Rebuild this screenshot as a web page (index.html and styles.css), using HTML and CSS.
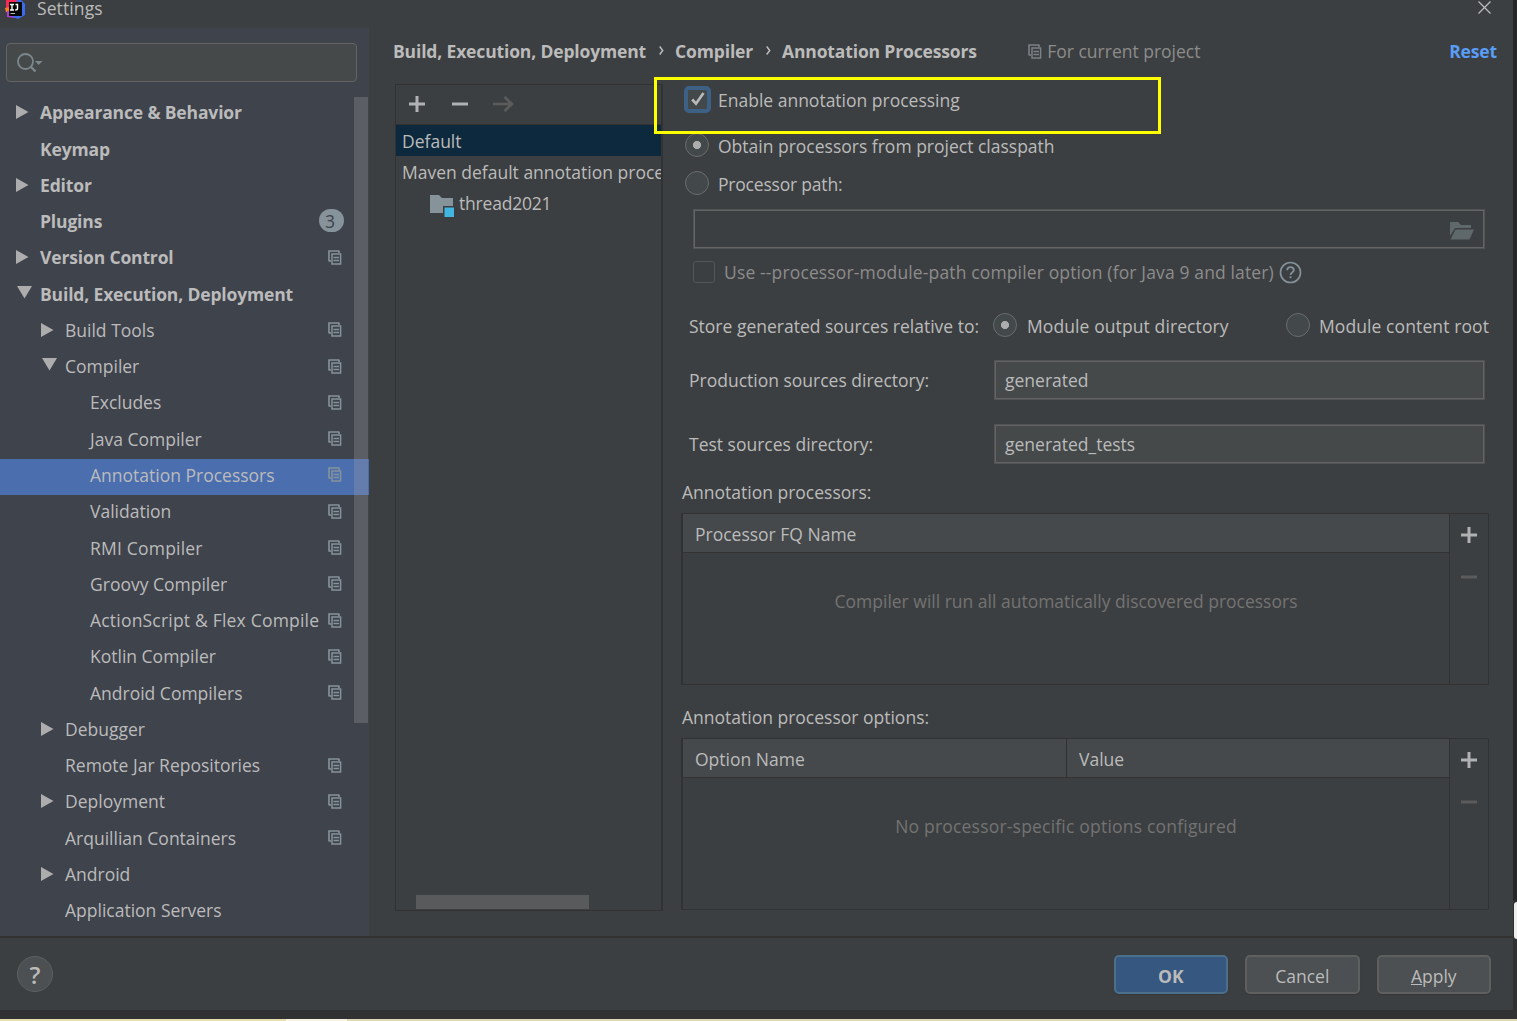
FILE: index.html
```html
<!DOCTYPE html>
<html lang="en">
<head>
    <meta charset="UTF-8">
    <meta name="viewport" content="width=device-width, initial-scale=1.0">
    <title>Settings</title>
    <link rel="stylesheet" href="styles.css">
</head>
<body>
    <!-- Shared icons -->
    <svg class="defs" width="0" height="0">
        <symbol id="copy" viewBox="0 0 14 15">
            <path d="M1 11.5V1H11.5M3.2 11H1M11 1V3" fill="none" stroke="currentColor" stroke-width="1.6"/>
            <rect x="4" y="4" width="8.6" height="10" fill="none" stroke="currentColor" stroke-width="1.5"/>
            <path d="M5.5 7.5H11M5.5 10.5H11" stroke="currentColor" stroke-width="1.4"/>
        </symbol>
        <symbol id="right" viewBox="0 0 13 14"><path d="M0 0L12.5 7L0 14Z" fill="#adadad"/></symbol>
        <symbol id="down" viewBox="0 0 15 13"><path d="M0 0H15L7.5 12.5Z" fill="#adadad"/></symbol>
        <symbol id="plus" viewBox="0 0 16 16"><path d="M0 8H16M8 0V16" stroke="currentColor" stroke-width="3"/></symbol>
        <symbol id="minus" viewBox="0 0 16 16"><path d="M0 8H16" stroke="currentColor" stroke-width="3"/></symbol>
    </svg>

    <div class="dialog">
        <!-- Title bar -->
        <div class="titlebar">
            <svg class="logo" width="21" height="20" viewBox="0 0 21 20">
                <path d="M1 0H13L10 10L1 9Z" fill="#fe2857"/>
                <path d="M0 8L5 7V13L1 12Z" fill="#fc801d"/>
                <path d="M2 11L10 12V18L2 17Z" fill="#af3bd8"/>
                <path d="M12 0H16L20 4V15L13 19L8 17Z" fill="#3b6cf0"/>
                <rect x="4" y="2" width="13" height="14" fill="#080808"/>
                <path d="M5 4.5H9M7 4.5V10M5 10H9M10.5 4.5H12.5V8.5Q12.5 10 10.2 10" fill="none" stroke="#fff" stroke-width="1.4"/>
                <path d="M5.5 13.5H10" stroke="#bbb" stroke-width="1"/>
            </svg>
            <span>Settings</span>
            <svg class="close" width="13" height="13" viewBox="0 0 13 13"><path d="M.5 .5L12.5 12.5M12.5 .5L.5 12.5" stroke="#bdbdbd" stroke-width="1.2"/></svg>
        </div>

        <div class="body">
            <!-- Settings tree -->
            <div class="sidebar">
                <div class="search">
                    <svg width="26" height="20" viewBox="0 0 26 20">
                        <circle cx="8.5" cy="8.5" r="7.5" fill="none" stroke="#7b878c" stroke-width="1.8"/>
                        <path d="M13.5 13.5L18.5 18.5" stroke="#7b878c" stroke-width="2.4"/>
                        <path d="M18 8H25.5L21.7 12Z" fill="#7b878c"/>
                    </svg>
                </div>
                <div class="tree">
                    <div class="row l1 bold"><svg class="arrow"><use href="#right"/></svg>Appearance &amp; Behavior</div>
                    <div class="row l1 bold">Keymap</div>
                    <div class="row l1 bold"><svg class="arrow"><use href="#right"/></svg>Editor</div>
                    <div class="row l1 bold">Plugins<span class="badge">3</span></div>
                    <div class="row l1 bold"><svg class="arrow"><use href="#right"/></svg>Version Control<svg class="copy"><use href="#copy"/></svg></div>
                    <div class="row l1 bold"><svg class="arrow open"><use href="#down"/></svg>Build, Execution, Deployment</div>
                    <div class="row l2"><svg class="arrow"><use href="#right"/></svg>Build Tools<svg class="copy"><use href="#copy"/></svg></div>
                    <div class="row l2"><svg class="arrow open"><use href="#down"/></svg>Compiler<svg class="copy"><use href="#copy"/></svg></div>
                    <div class="row l3">Excludes<svg class="copy"><use href="#copy"/></svg></div>
                    <div class="row l3">Java Compiler<svg class="copy"><use href="#copy"/></svg></div>
                    <div class="row l3 selected">Annotation Processors<svg class="copy"><use href="#copy"/></svg></div>
                    <div class="row l3">Validation<svg class="copy"><use href="#copy"/></svg></div>
                    <div class="row l3 wide">RMI Compiler<svg class="copy"><use href="#copy"/></svg></div>
                    <div class="row l3">Groovy Compiler<svg class="copy"><use href="#copy"/></svg></div>
                    <div class="row l3 wide">ActionScript &amp; Flex Compile<svg class="copy"><use href="#copy"/></svg></div>
                    <div class="row l3">Kotlin Compiler<svg class="copy"><use href="#copy"/></svg></div>
                    <div class="row l3">Android Compilers<svg class="copy"><use href="#copy"/></svg></div>
                    <div class="row l2"><svg class="arrow"><use href="#right"/></svg>Debugger</div>
                    <div class="row l2">Remote Jar Repositories<svg class="copy"><use href="#copy"/></svg></div>
                    <div class="row l2"><svg class="arrow"><use href="#right"/></svg>Deployment<svg class="copy"><use href="#copy"/></svg></div>
                    <div class="row l2">Arquillian Containers<svg class="copy"><use href="#copy"/></svg></div>
                    <div class="row l2"><svg class="arrow"><use href="#right"/></svg>Android</div>
                    <div class="row l2">Application Servers</div>
                    <div class="tree-scroll"></div>
                </div>
            </div>

            <!-- Annotation processors page -->
            <div class="main">
                <div class="breadcrumb">
                    <span class="bold">Build, Execution, Deployment</span>
                    <svg class="sep" width="5" height="9" viewBox="0 0 5 9"><path d="M.7 .5L3.7 4.5L.7 8.5" fill="none" stroke="#bbb" stroke-width="1.5"/></svg>
                    <span class="bold">Compiler</span>
                    <svg class="sep" width="5" height="9" viewBox="0 0 5 9"><path d="M.7 .5L3.7 4.5L.7 8.5" fill="none" stroke="#bbb" stroke-width="1.5"/></svg>
                    <span class="bold">Annotation Processors</span>
                    <svg class="copy"><use href="#copy"/></svg>
                    <span class="project">For current project</span>
                    <a class="reset bold">Reset</a>
                </div>

                <div class="content">
                    <div class="profiles">
                        <div class="toolbar">
                            <svg class="tool"><use href="#plus"/></svg>
                            <svg class="tool"><use href="#minus"/></svg>
                            <svg width="21" height="16" viewBox="0 0 21 16"><path d="M0 8H19M11.5 1L19 8L11.5 15" fill="none" stroke="#5b5b5b" stroke-width="2.6"/></svg>
                        </div>
                        <div class="profile active">Default</div>
                        <div class="profile">Maven default annotation proce</div>
                        <div class="profile module">
                            <svg width="25" height="22" viewBox="0 0 25 22">
                                <path d="M0 0H9L12 3H23V18H0Z" fill="#87939a"/>
                                <rect x="13" y="11" width="12" height="11" fill="#3c3f41"/>
                                <rect x="14.5" y="12.5" width="9.5" height="9.5" fill="#40b6e0"/>
                            </svg>thread2021
                        </div>
                        <div class="profiles-scroll"></div>
                    </div>

                    <div class="form">
                        <div class="line enable">
                            <span class="check focused"><svg width="14" height="14" viewBox="0 0 14 14"><path d="M1.2 7.5L5 11.7L12.5 1" fill="none" stroke="#b8b8b8" stroke-width="2.7"/></svg></span>
                            <span>Enable annotation processing</span>
                        </div>
                        <div class="line obtain"><span class="radio on"></span><span>Obtain processors from project classpath</span></div>
                        <div class="line path"><span class="radio"></span><span>Processor path:</span></div>
                        <div class="field path-field">
                            <svg width="24" height="18" viewBox="0 0 24 18"><path d="M0 0H8L11 3H21V6H5L0 14Z M5.5 7.5H24L19.5 17.5H.5Z" fill="#5f686b"/></svg>
                        </div>
                        <div class="line module-path">
                            <span class="check off"></span>
                            <span>Use --processor-module-path compiler option (for Java 9 and later)</span>
                            <svg width="23" height="23" viewBox="0 0 23 23">
                                <circle cx="11.5" cy="11.5" r="10" fill="none" stroke="#84919a" stroke-width="1.7"/>
                                <path d="M8.2 9.2Q8.3 6.2 11.5 6.2T14.8 9.1Q14.8 10.5 13.2 11.5T11.5 14" fill="none" stroke="#84919a" stroke-width="1.8"/>
                                <rect x="10.6" y="15.3" width="1.9" height="1.9" fill="#84919a"/>
                            </svg>
                        </div>
                        <div class="line store">
                            <span class="store-label">Store generated sources relative to:</span>
                            <span class="radio on"></span><span class="store-output">Module output directory</span>
                            <span class="radio"></span><span class="store-root">Module content root</span>
                        </div>
                        <div class="line dir">
                            <span class="dir-label">Production sources directory:</span>
                            <div class="field filled">generated</div>
                        </div>
                        <div class="line dir">
                            <span class="dir-label">Test sources directory:</span>
                            <div class="field filled">generated_tests</div>
                        </div>

                        <div class="caption">Annotation processors:</div>
                        <div class="table">
                            <div class="grid">
                                <div class="head"><span>Processor FQ Name</span></div>
                                <div class="empty">Compiler will run all automatically discovered processors</div>
                            </div>
                            <div class="actions">
                                <svg class="tool"><use href="#plus"/></svg>
                                <svg class="tool disabled"><use href="#minus"/></svg>
                            </div>
                        </div>

                        <div class="caption">Annotation processor options:</div>
                        <div class="table">
                            <div class="grid">
                                <div class="head two"><span>Option Name</span><span>Value</span></div>
                                <div class="empty wide">No processor-specific options configured</div>
                            </div>
                            <div class="actions">
                                <svg class="tool"><use href="#plus"/></svg>
                                <svg class="tool disabled"><use href="#minus"/></svg>
                            </div>
                        </div>
                    </div>
                </div>
            </div>
        </div>

        <!-- Buttons -->
        <div class="footer">
            <span class="help">?</span>
            <button class="btn primary">OK</button>
            <button class="btn">Cancel</button>
            <button class="btn"><u>A</u>pply</button>
        </div>

        <div class="highlight"></div>
    </div>
    <div class="desktop-strip"></div>
    <div class="desktop-edge"></div>
</body>
</html>
```

FILE: styles.css
```css
* { box-sizing: border-box; }
body { margin: 0; height: 1021px; overflow: hidden; position: relative; background: linear-gradient(90deg, transparent 1513px, #252627 1513px) 0 0 / 100% 900px no-repeat, #2f3133; color: #bbbbbb; font-family: "Open Sans", "Noto Sans", sans-serif; font-size: 17.5px; line-height: 24px; white-space: nowrap; }
svg { flex: none; display: block; }
.defs { position: absolute; }
.bold { font-weight: 700; letter-spacing: -0.15px; }
.wide { letter-spacing: 0.2px; }
.dialog { position: relative; width: 1513px; height: 1010px; background: #3c3f41; display: flex; flex-direction: column; }

/* Title bar */
.titlebar { height: 28px; display: flex; align-items: flex-start; padding: 0 22px 0 5px; }
.titlebar span { margin: -4px auto 0 11px; letter-spacing: 0.1px; }
.close { margin-top: 1px; }

.body { display: flex; height: 908px; }

/* Sidebar */
.sidebar { width: 369px; background: #3f434c; overflow: hidden; }
.search { width: 351px; height: 39px; margin: 15px 0 14.5px 6px; border: 1.5px solid #646464; border-radius: 4px; background: #45494a; padding: 9px 0 0 10px; }
.tree { position: relative; }
.row { height: 36.27px; display: flex; align-items: center; padding-right: 27px; padding-bottom: 4.6px; }
.l1 { padding-left: 40px; }
.l2 { padding-left: 65px; }
.l3 { padding-left: 90px; }
.arrow { width: 13px; height: 14px; margin-left: -24px; margin-right: 11px; }
.arrow.open { width: 15px; height: 13px; margin: -3px 8px 0 -23px; }
.copy { width: 14px; height: 15px; color: #87939a; }
.row .copy { margin-left: auto; }
.selected { background: #4b6eaf; }
.badge { width: 25px; height: 23px; margin: -1px -2px 0 auto; border-radius: 12px; background: #87939a; color: #3f434c; font-weight: 400; text-align: center; padding-right: 3px; line-height: 24px; }
.tree-scroll { position: absolute; right: 1px; top: 0; width: 14px; height: 626px; background: rgba(166, 166, 166, 0.28); }

/* Page */
.main { flex: 1; padding: 10px 24px 0 24px; }
.breadcrumb { height: 26px; display: flex; align-items: center; }
.sep { margin: -2px 11px 0 13px; }
.breadcrumb .copy { margin-left: auto; color: #7a8185; }
.project { width: 153px; margin-left: 5px; color: #8c8c8c; }
.reset { margin: 0 -8px 0 249px; color: #589df6; }
.content { display: flex; margin: 18px 0 0 2px; }
.profiles { position: relative; width: 268px; height: 827px; margin-top: 2px; border: 1px solid #323232; border-right-width: 2px; overflow: hidden; }
.toolbar { height: 40px; display: flex; align-items: center; gap: 27px; padding: 0 0 1px 13px; border-bottom: 1px solid #323232; }
.toolbar svg:last-child { margin-left: -2px; }
.tool { width: 16px; height: 16px; color: #afb1b3; }
.disabled { color: #5b5b5b; }
.profile { height: 31px; padding: 4px 0 0 6px; }
.active { background: #0d293e; }
.module { display: flex; padding-left: 34px; gap: 4px; letter-spacing: -0.2px; }
.module svg { margin-top: 4px; }
.profiles-scroll { position: absolute; left: 20px; bottom: 1px; width: 173px; height: 14px; background: #595a5c; }

.form { width: 808px; margin-left: 18px; }
.line { display: flex; align-items: center; }
.enable { height: 37px; padding: 0 0 1px 3px; gap: 7px; }
.check { width: 22px; height: 22px; border: 1.5px solid #6b6b6b; border-radius: 3px; background: #43494a; display: flex; align-items: center; justify-content: center; }
.focused { width: 27px; height: 27px; border: 4px solid #3d6185; border-radius: 5px; margin-top: -2px; }
.off { background: none; border-color: #545556; }
.radio { width: 24px; height: 24px; border: 1.5px solid #6b6b6b; border-radius: 50%; background: #43494a; margin-top: -2px; flex: none; }
.on { background: radial-gradient(circle, #adadad 3.7px, #43494a 4.4px); }
.obtain, .path { height: 37px; padding: 0 0 1px 4px; gap: 9px; }
.obtain { margin-top: 9px; }
.path { letter-spacing: -0.2px; padding-bottom: 0; }
.path .radio { margin-top: -1px; }
.field { height: 40px; border: 1px solid #515455; box-shadow: inset 0 0 0 1px #646464; }
.path-field { width: 792px; margin: 7px 0 0 12px; display: flex; justify-content: flex-end; align-items: center; padding: 3px 10px 0 0; }
.module-path { height: 48px; margin-top: -1px; padding-left: 12px; gap: 9px; color: #8c8c8c; letter-spacing: 0.14px; }
.module-path svg { margin-left: -4px; }
.store { height: 58px; margin-top: 1px; padding-left: 8px; }
.store-label { width: 304px; }
.store-output { margin-left: 10px; width: 259px; letter-spacing: 0.1px; }
.store-root { margin-left: 9px; letter-spacing: 0.1px; }
.dir { height: 40px; margin: 5px 0 23.5px; padding-left: 8px; }
.dir + .dir { margin: 0; }
.dir-label { width: 305px; }
.filled { width: 491px; background: #45494a; padding: 7px 10px; }
.caption { height: 49.5px; padding: 16.5px 0 0 1px; }
.table { height: 172px; width: 808px; display: flex; border: 1px solid #323232; border-left-width: 2px; }
.table + .caption { height: 53px; padding-top: 20px; }
.grid { flex: 1; }
.head { height: 39px; display: flex; background: #45494b; border-bottom: 1px solid #323232; padding-left: 12px; }
.head span { padding-top: 8px; }
.two span { width: 371px; }
.two span + span { border-left: 1px solid #323232; padding-left: 12px; }
.empty { text-align: center; color: #737373; padding-top: 36px; }
.actions { width: 39px; border-left: 1px solid #323232; padding: 13px 0 0 11px; }
.actions .disabled { margin-top: 26px; }

/* Footer */
.footer { flex: 1; border-top: 2px solid #323232; display: flex; align-items: center; padding: 0 22px 0 17px; gap: 17px; }
.help { width: 36px; height: 36px; border: 1px solid #5e6060; border-radius: 50%; background: #4c5052; font-size: 24px; font-weight: 600; line-height: 35px; text-align: center; margin-right: auto; }
.btn { width: 114.5px; height: 39px; border: 2px solid #5e6060; border-radius: 5px; background: #4c5052; color: #bbbbbb; font: inherit; padding: 3px 0 0; box-shadow: 0 1px 1px #35383a; }
.primary { background: #365880; border-color: #4c708c; font-weight: 700; }
.highlight { position: absolute; left: 654px; top: 77px; width: 507px; height: 57px; border: 3px solid #ffff00; }

/* Desktop showing around the dialog */
.desktop-strip { position: absolute; left: 0; right: 0; bottom: 0; height: 2px; background: linear-gradient(90deg, #e8dfb0 0 286px, #f7f2e2 286px 347px, #ddd8b6 347px); }
.desktop-edge { position: absolute; right: 0; top: 902px; width: 3px; height: 37px; border-radius: 3px 0 0 3px; background: #eeeeee; }
```
